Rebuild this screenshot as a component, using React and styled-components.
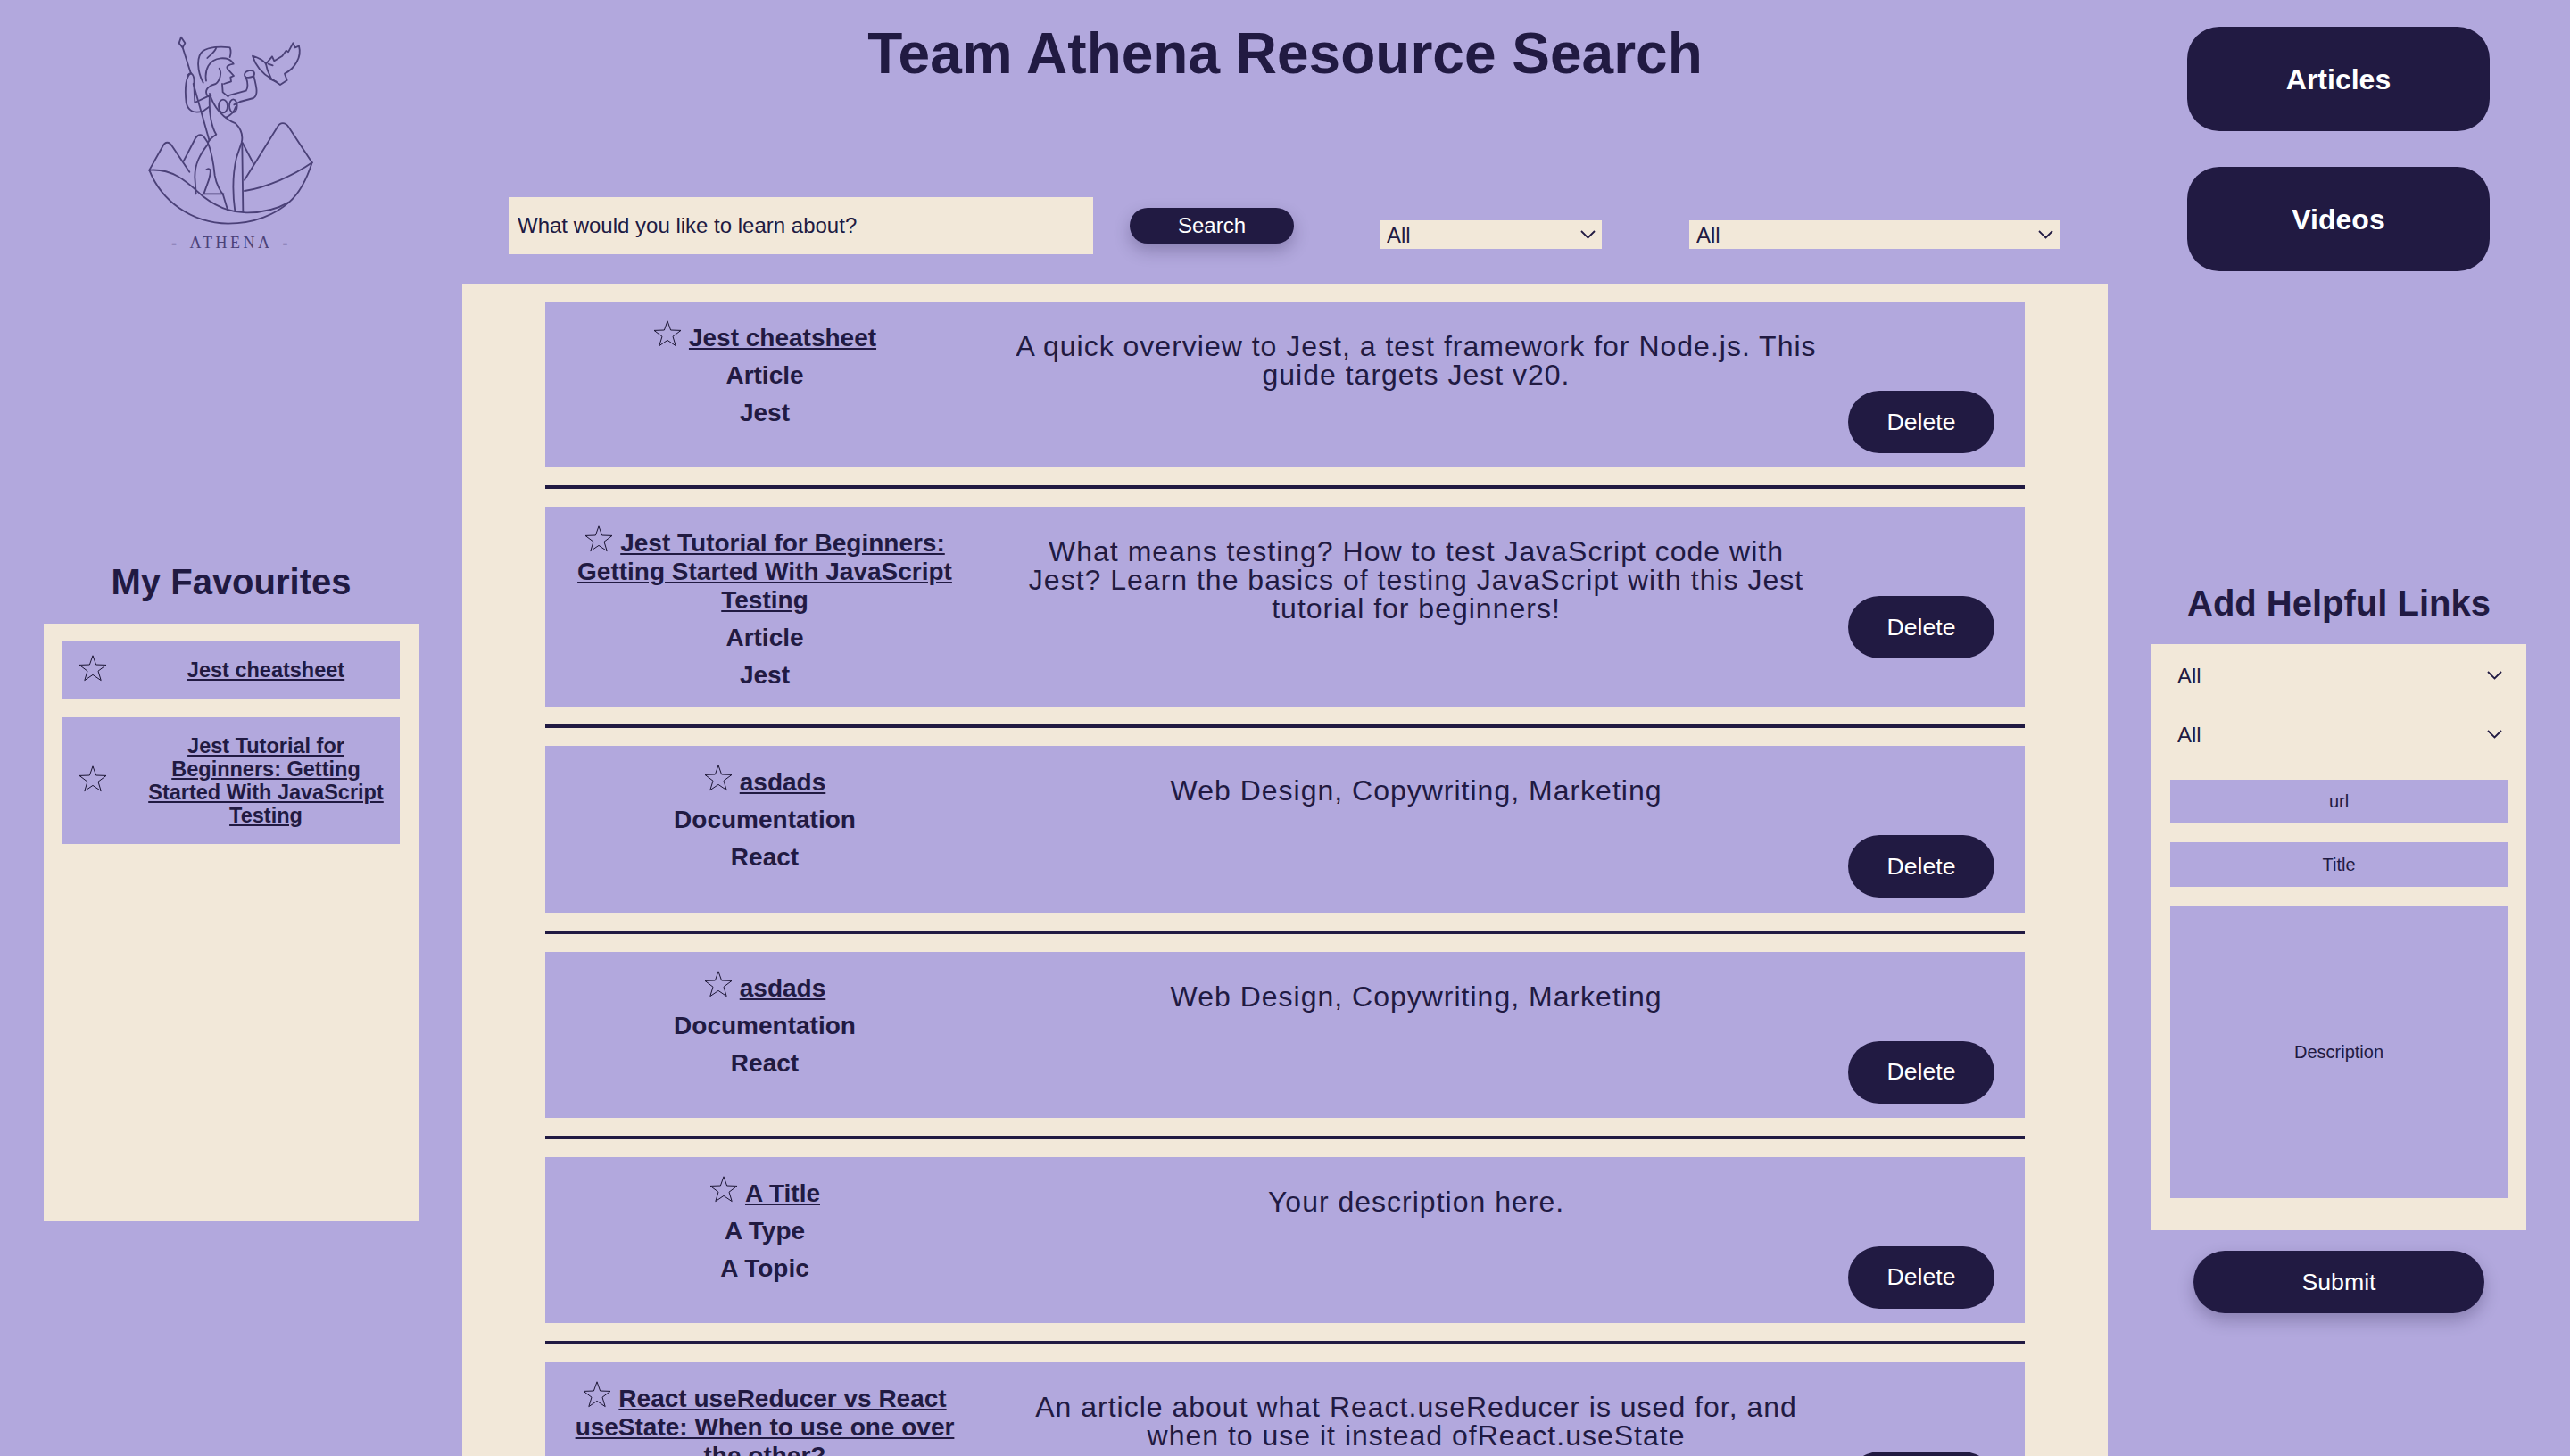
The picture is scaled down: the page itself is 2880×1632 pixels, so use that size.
import React from "react";
import styled, { createGlobalStyle } from "styled-components";

const LAV = "#b2a8dd";
const CREAM = "#f2e8d9";
const DARK = "#211a42";

const Global = createGlobalStyle`
  html, body { margin: 0; padding: 0; overflow: hidden; background: ${LAV}; }
  body { font-family: "Liberation Sans", Arial, sans-serif; color: ${DARK}; }
  input::placeholder { color: ${DARK}; opacity: 1; }
`;

const Page = styled.div`
  display: grid;
  grid-template-columns: 518px 1844px 518px;
  height: 1632px;
  overflow: hidden;
  background: ${LAV};
`;

const Side = styled.aside`
  display: flex;
  flex-direction: column;
  align-items: center;
`;

const Main = styled.main`
  display: flex;
  flex-direction: column;
  min-width: 0;
`;

const LogoBox = styled.div`
  display: flex;
  flex-direction: column;
  align-items: center;
  margin-top: 20px;
  height: 290px;
`;

const LogoWord = styled.div`
  font-family: "Liberation Serif", serif;
  font-size: 18px;
  line-height: 22px;
  letter-spacing: 3.5px;
  word-spacing: 4px;
  color: #4b4178;
  white-space: pre;
  margin-top: 1px;
`;

const SideTitle = styled.h2`
  margin: ${(p) => p.$top}px 0 ${(p) => p.$bottom}px;
  font-size: 40px;
  line-height: 46px;
  font-weight: 700;
  text-align: center;
`;

const FavPanel = styled.section`
  box-sizing: border-box;
  width: 420px;
  height: 670px;
  padding: 20px 21px;
  background: ${CREAM};
  display: flex;
  flex-direction: column;
  gap: 21px;
`;

const FavItem = styled.div`
  display: flex;
  align-items: center;
  padding: 19px 15px 19px 18px;
  background: ${LAV};
`;

const FavLink = styled.a`
  flex: 1;
  margin-left: 43px;
  font-size: 23.5px;
  line-height: 26px;
  font-weight: 700;
  text-align: center;
  color: ${DARK};
  text-decoration: underline;
`;

const StarSvg = styled.svg`
  flex: none;
  width: 32px;
  height: 29px;
  margin: -4px 0 1px;
  overflow: visible;
`;

const InlineStar = styled(StarSvg)`
  display: inline-block;
  margin: 0 8px 0 0;
  vertical-align: baseline;
`;

const Heading = styled.h1`
  margin: 0;
  padding-top: 23px;
  font-size: 64px;
  line-height: 74px;
  font-weight: 700;
  text-align: center;
`;

const SearchRow = styled.form`
  display: flex;
  align-items: center;
  gap: 41px;
  height: 64px;
  margin: 124px 0 33px;
  padding-left: 52px;
`;

const SearchInput = styled.input`
  box-sizing: border-box;
  flex: none;
  width: 655px;
  height: 64px;
  padding: 0 10px;
  border: 0;
  background: ${CREAM};
  color: ${DARK};
  font: 24px "Liberation Sans", Arial, sans-serif;
`;

const PillButton = styled.button`
  flex: none;
  width: ${(p) => p.$w}px;
  height: ${(p) => p.$h}px;
  padding: 0;
  border: 0;
  border-radius: ${(p) => p.$h / 2}px;
  background: ${DARK};
  color: #fff;
  font: ${(p) => p.$size}px "Liberation Sans", Arial, sans-serif;
  box-shadow: ${(p) => (p.$shadow ? "0 8px 18px rgba(33, 26, 66, 0.28)" : "none")};
`;

const SelectWrap = styled.div`
  position: relative;
  flex: none;
  width: ${(p) => p.$w}px;
  margin-left: ${(p) => p.$left}px;
  margin-top: ${(p) => p.$top}px;
`;

const Select = styled.select`
  appearance: none;
  display: block;
  box-sizing: border-box;
  width: 100%;
  height: ${(p) => p.$h}px;
  padding: 0 0 0 8px;
  border: 0;
  border-radius: 0;
  background: ${CREAM};
  color: ${DARK};
  font: 24px "Liberation Sans", Arial, sans-serif;
`;

const Chevron = styled.svg`
  position: absolute;
  top: 50%;
  right: ${(p) => p.$right}px;
  width: 17px;
  height: 10px;
  margin-top: -5px;
  pointer-events: none;
`;

const Results = styled.section`
  flex: 1;
  padding: 20px 93px;
  background: ${CREAM};
`;

const Card = styled.article`
  display: grid;
  grid-template-columns: 490px 960px 208px;
  background: ${LAV};
`;

const CardInfo = styled.div`
  display: flex;
  flex-direction: column;
  gap: 10px;
  align-items: center;
  padding: 21px 19px 19px 21px;
  font-size: 28px;
  line-height: 32px;
  font-weight: 700;
  text-align: center;
`;

const CardLink = styled.a`
  color: ${DARK};
  text-decoration: underline;
`;

const CardDesc = styled.p`
  margin: 0;
  padding: 34px 24px 0 36px;
  font-size: 32px;
  line-height: 32px;
  letter-spacing: 1px;
  text-align: center;
`;

const CardAction = styled.div`
  display: flex;
  justify-content: flex-end;
  align-items: flex-start;
  padding: 100px 34px 16.3px 0;
`;

const Divider = styled.hr`
  height: 4px;
  margin: 20px 0;
  border: 0;
  background: ${DARK};
`;

const NavButton = styled.button`
  width: 339px;
  height: 117px;
  padding: 2px 0 0;
  border: 0;
  border-radius: 36px;
  background: ${DARK};
  color: #fff;
  font: 700 32px "Liberation Sans", Arial, sans-serif;
`;

const NavStack = styled.nav`
  display: flex;
  flex-direction: column;
  gap: 40px;
  margin: 30px 1px 0 0;
`;

const AddPanel = styled.form`
  box-sizing: border-box;
  width: 420px;
  height: 657px;
  padding: 2px 21px 0;
  background: ${CREAM};
  display: flex;
  flex-direction: column;
`;

const FieldInput = styled.input`
  box-sizing: border-box;
  width: 100%;
  height: ${(p) => p.$h}px;
  margin-top: ${(p) => p.$top}px;
  border: 0;
  padding: 0;
  background: ${LAV};
  color: ${DARK};
  text-align: center;
  font: 20px "Liberation Sans", Arial, sans-serif;
`;

const SubmitWrap = styled.div`
  margin-top: 23px;
`;

const Star = ({ inline }) => {
  const Comp = inline ? InlineStar : StarSvg;
  return (
    <Comp viewBox="0 0 32 29" aria-hidden="true">
      <polygon
        points="16,0.8 19.6,11 31,11.4 22,18.2 25.2,28.6 16,22.4 6.8,28.6 10,18.2 1,11.4 12.4,11"
        fill="none"
        stroke="#1a1433"
        strokeWidth="1"
      />
    </Comp>
  );
};

const Chev = ({ right }) => (
  <Chevron $right={right} viewBox="0 0 17 10" aria-hidden="true">
    <path d="M1 1 L8.5 8.5 L16 1" fill="none" stroke={DARK} strokeWidth="1.8" />
  </Chevron>
);

const Logo = () => (
  <svg width="320" height="240" viewBox="0 0 960 720" aria-label="Athena logo" role="img">
    <g fill="none" stroke="#4b4178" strokeWidth="5.5" strokeLinecap="round" strokeLinejoin="round">
      <path d="M312 65 L325 85 L317 100 L305 85 Z" />
      <path d="M317 100 L345 188 M353 222 L406 410" />
      <path d="M386 218 C366 180 362 130 385 112 C405 98 445 95 476 100 C480 110 478 125 476 132" />
      <path d="M400 135 C408 125 425 118 430 100" />
      <path d="M396 212 C390 175 405 140 445 136 C470 134 482 143 488 155 C472 158 462 162 468 172 L489 195 L478 200 L480 214 L456 222" />
      <path d="M440 170 C450 185 442 212 428 222 C408 226 392 240 397 255 C400 265 406 268 412 262" />
      <path d="M450 222 L452 250 L470 265" />
      <path d="M345 186 C328 195 323 235 329 285 C335 312 352 322 385 314 L405 300" />
      <path d="M335 192 C345 180 358 190 355 222 L358 285 L406 262" />
      <path d="M490 292 L510 282 L555 270 C572 260 566 235 556 195" />
      <path d="M525 192 C525 178 555 170 558 185 C560 197 548 202 530 200 C526 198 525 195 525 192 Z" />
      <path d="M530 200 C537 220 537 235 530 245 L468 262" />
      <ellipse cx="453" cy="297" rx="15" ry="22" />
      <ellipse cx="487" cy="296" rx="13" ry="22" />
      <path d="M462 335 C478 328 490 318 495 300" />
      <path d="M408 255 C420 300 455 340 495 355 C515 375 520 400 515 420 L498 470 C484 530 486 600 493 650" />
      <path d="M408 262 C404 320 415 370 430 392 C418 400 405 410 402 420 C412 445 420 480 425 530 C430 560 445 585 452 592 L468 645" />
      <path d="M402 425 C375 460 358 490 358 535 L362 592" />
      <path d="M397 510 C412 503 414 512 405 545 L388 592 L455 592" />
      <path d="M517 425 L520 652" />
      <path d="M518 420 L555 490" />
      <path d="M205 512 L250 432 C258 415 272 415 282 432 L340 518" />
      <path d="M320 482 L360 405 C370 390 382 390 392 405 L402 420" />
      <path d="M525 545 L635 368 C645 350 662 350 674 368 L752 487" />
      <path d="M205 512 C245 615 345 690 470 692 C560 692 630 660 675 620" />
      <path d="M205 512 C290 505 340 560 385 600 C430 635 480 655 530 655 C590 656 640 640 675 620 C710 590 735 540 752 487" />
      <path d="M525 582 C600 570 690 530 752 487" />
      <path d="M552 128 C575 135 590 145 597 155 L618 130 L625 145 L652 128 L665 110 L672 115 L688 85 L695 100 L708 95 C718 130 695 170 660 188 L668 210 L645 225 L615 205 C590 190 565 170 552 128 Z" />
      <path d="M597 155 L602 175 L615 205 M610 205 L632 215 M605 155 L620 160" />
    </g>
  </svg>
);

const cards = [
  { t: "Jest cheatsheet", a: "Article", b: "Jest", d: "A quick overview to Jest, a test framework for Node.js. This guide targets Jest v20." },
  { t: "Jest Tutorial for Beginners: Getting Started With JavaScript Testing", a: "Article", b: "Jest", d: "What means testing? How to test JavaScript code with Jest? Learn the basics of testing JavaScript with this Jest tutorial for beginners!" },
  { t: "asdads", a: "Documentation", b: "React", d: "Web Design, Copywriting, Marketing" },
  { t: "asdads", a: "Documentation", b: "React", d: "Web Design, Copywriting, Marketing" },
  { t: "A Title", a: "A Type", b: "A Topic", d: "Your description here." },
  { t: "React useReducer vs React useState: When to use one over the other?", a: "Article", b: "React", d: "An article about what React.useReducer is used for, and when to use it instead ofReact.useState" },
];

export default function App() {
  return (
    <>
      <Global />
      <Page>
        <Side>
          <LogoBox>
            <Logo />
            <LogoWord>{"- ATHENA -"}</LogoWord>
          </LogoBox>
          <SideTitle $top={319} $bottom={24}>My Favourites</SideTitle>
          <FavPanel>
            <FavItem>
              <Star />
              <FavLink href="#">Jest cheatsheet</FavLink>
            </FavItem>
            <FavItem>
              <Star />
              <FavLink href="#">Jest Tutorial for Beginners: Getting Started With JavaScript Testing</FavLink>
            </FavItem>
          </FavPanel>
        </Side>

        <Main>
          <Heading>Team Athena Resource Search</Heading>
          <SearchRow>
            <SearchInput placeholder="What would you like to learn about?" />
            <PillButton type="button" $w={184} $h={40} $size={24} $shadow>Search</PillButton>
            <SelectWrap $w={249} $left={55} $top={20}>
              <Select $h={32}><option>All</option></Select>
              <Chev right={7} />
            </SelectWrap>
            <SelectWrap $w={415} $left={57} $top={20}>
              <Select $h={32}><option>All</option></Select>
              <Chev right={7} />
            </SelectWrap>
          </SearchRow>
          <Results>
            {cards.map((c, i) => (
              <React.Fragment key={i}>
                {i > 0 && <Divider />}
                <Card>
                  <CardInfo>
                    <div>
                      <Star inline />
                      <CardLink href="#">{c.t}</CardLink>
                    </div>
                    <div>{c.a}</div>
                    <div>{c.b}</div>
                  </CardInfo>
                  <CardDesc>{c.d}</CardDesc>
                  <CardAction>
                    <PillButton type="button" $w={164} $h={70} $size={26.67}>Delete</PillButton>
                  </CardAction>
                </Card>
              </React.Fragment>
            ))}
          </Results>
        </Main>

        <Side>
          <NavStack>
            <NavButton type="button">Articles</NavButton>
            <NavButton type="button">Videos</NavButton>
          </NavStack>
          <SideTitle $top={349} $bottom={23}>Add Helpful Links</SideTitle>
          <AddPanel>
            <SelectWrap $w={378} $left={0} $top={0}>
              <Select $h={66}><option>All</option></Select>
              <Chev right={6} />
            </SelectWrap>
            <SelectWrap $w={378} $left={0} $top={0}>
              <Select $h={66}><option>All</option></Select>
              <Chev right={6} />
            </SelectWrap>
            <FieldInput $h={49} $top={18} placeholder="url" />
            <FieldInput $h={50} $top={21} placeholder="Title" />
            <FieldInput $h={328} $top={21} placeholder="Description" />
          </AddPanel>
          <SubmitWrap>
            <PillButton type="button" $w={326} $h={70} $size={26.67} $shadow>Submit</PillButton>
          </SubmitWrap>
        </Side>
      </Page>
    </>
  );
}
